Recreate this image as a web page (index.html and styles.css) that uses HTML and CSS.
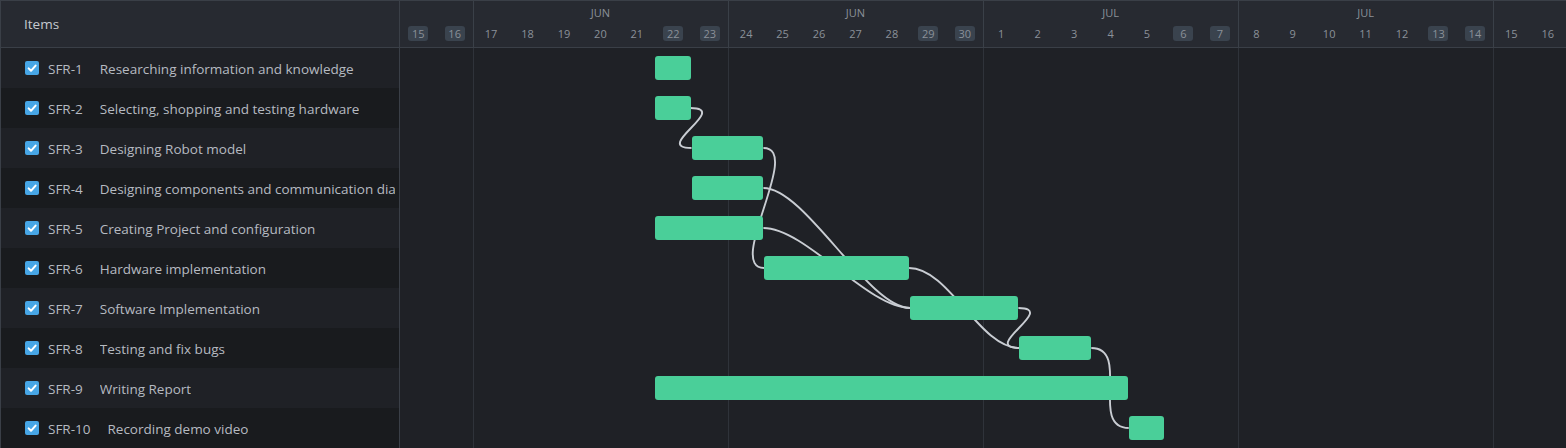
FILE: index.html
```html
<!DOCTYPE html>
<html lang="en">
<head>
<meta charset="utf-8">
<title>Gantt</title>
<link rel="stylesheet" href="styles.css">
</head>
<body>
<div class="gantt">
  <div class="side">
    <div class="side-head">Items</div>
    <div class="side-body">
      <div class="side-row"><span class="check"><svg viewBox="0 0 14 14"><path d="M3.6 7.4 L6 9.8 L10.6 4.6"/></svg></span><span class="sid">SFR-1</span><span class="title">Researching information and knowledge</span></div>
      <div class="side-row"><span class="check"><svg viewBox="0 0 14 14"><path d="M3.6 7.4 L6 9.8 L10.6 4.6"/></svg></span><span class="sid">SFR-2</span><span class="title">Selecting, shopping and testing hardware</span></div>
      <div class="side-row"><span class="check"><svg viewBox="0 0 14 14"><path d="M3.6 7.4 L6 9.8 L10.6 4.6"/></svg></span><span class="sid">SFR-3</span><span class="title">Designing Robot model</span></div>
      <div class="side-row"><span class="check"><svg viewBox="0 0 14 14"><path d="M3.6 7.4 L6 9.8 L10.6 4.6"/></svg></span><span class="sid">SFR-4</span><span class="title">Designing components and communication dia</span></div>
      <div class="side-row"><span class="check"><svg viewBox="0 0 14 14"><path d="M3.6 7.4 L6 9.8 L10.6 4.6"/></svg></span><span class="sid">SFR-5</span><span class="title">Creating Project and configuration</span></div>
      <div class="side-row"><span class="check"><svg viewBox="0 0 14 14"><path d="M3.6 7.4 L6 9.8 L10.6 4.6"/></svg></span><span class="sid">SFR-6</span><span class="title">Hardware implementation</span></div>
      <div class="side-row"><span class="check"><svg viewBox="0 0 14 14"><path d="M3.6 7.4 L6 9.8 L10.6 4.6"/></svg></span><span class="sid">SFR-7</span><span class="title">Software Implementation</span></div>
      <div class="side-row"><span class="check"><svg viewBox="0 0 14 14"><path d="M3.6 7.4 L6 9.8 L10.6 4.6"/></svg></span><span class="sid">SFR-8</span><span class="title">Testing and fix bugs</span></div>
      <div class="side-row"><span class="check"><svg viewBox="0 0 14 14"><path d="M3.6 7.4 L6 9.8 L10.6 4.6"/></svg></span><span class="sid">SFR-9</span><span class="title">Writing Report</span></div>
      <div class="side-row"><span class="check"><svg viewBox="0 0 14 14"><path d="M3.6 7.4 L6 9.8 L10.6 4.6"/></svg></span><span class="sid">SFR-10</span><span class="title">Recording demo video</span></div>
    </div>
  </div>
  <div class="chart">
    <div class="chart-head">
      <div class="week w2">
        <div class="month"></div>
        <div class="days"><span class="day"><span class="num off">15</span></span><span class="day"><span class="num off">16</span></span></div>
      </div>
      <div class="week w7 sep">
        <div class="month">JUN</div>
        <div class="days"><span class="day"><span class="num">17</span></span><span class="day"><span class="num">18</span></span><span class="day"><span class="num">19</span></span><span class="day"><span class="num">20</span></span><span class="day"><span class="num">21</span></span><span class="day"><span class="num off">22</span></span><span class="day"><span class="num off">23</span></span></div>
      </div>
      <div class="week w7 sep">
        <div class="month">JUN</div>
        <div class="days"><span class="day"><span class="num">24</span></span><span class="day"><span class="num">25</span></span><span class="day"><span class="num">26</span></span><span class="day"><span class="num">27</span></span><span class="day"><span class="num">28</span></span><span class="day"><span class="num off">29</span></span><span class="day"><span class="num off">30</span></span></div>
      </div>
      <div class="week w7 sep">
        <div class="month">JUL</div>
        <div class="days"><span class="day"><span class="num">1</span></span><span class="day"><span class="num">2</span></span><span class="day"><span class="num">3</span></span><span class="day"><span class="num">4</span></span><span class="day"><span class="num">5</span></span><span class="day"><span class="num off">6</span></span><span class="day"><span class="num off">7</span></span></div>
      </div>
      <div class="week w7 sep">
        <div class="month">JUL</div>
        <div class="days"><span class="day"><span class="num">8</span></span><span class="day"><span class="num">9</span></span><span class="day"><span class="num">10</span></span><span class="day"><span class="num">11</span></span><span class="day"><span class="num">12</span></span><span class="day"><span class="num off">13</span></span><span class="day"><span class="num off">14</span></span></div>
      </div>
      <div class="week w2 sep">
        <div class="month"></div>
        <div class="days"><span class="day"><span class="num">15</span></span><span class="day"><span class="num">16</span></span></div>
      </div>
    </div>
    <div class="chart-body">
      <div class="stripe"></div><div class="stripe"></div><div class="stripe"></div><div class="stripe"></div><div class="stripe"></div>
      <div class="stripe"></div><div class="stripe"></div><div class="stripe"></div><div class="stripe"></div><div class="stripe"></div>
      <div class="wline wl-1"></div>
      <div class="wline wl-2"></div>
      <div class="wline wl-3"></div>
      <div class="wline wl-4"></div>
      <div class="wline wl-5"></div>
      <svg class="links" width="1166" height="400">
        <path d="M290.5 60 C330.5 60 251.5 100 291.5 100"/>
        <path d="M363.4 100 C403.4 100 324.4 220 364.4 220"/>
        <path d="M363.4 140 C405.4 140 468.1 260 510.1 260"/>
        <path d="M363.4 180 C405.4 180 468.1 260 510.1 260"/>
        <path d="M509.1 220 C549.1 220 579.4 300 619.4 300"/>
        <path d="M618.4 260 C658.4 260 579.4 300 619.4 300"/>
        <path d="M691.3 300 C731.3 300 688.75 380 728.75 380"/>
      </svg>
      <div class="bar" style="grid-row:1;grid-column:8 / 9"></div>
      <div class="bar" style="grid-row:2;grid-column:8 / 9"></div>
      <div class="bar" style="grid-row:3;grid-column:9 / 11"></div>
      <div class="bar" style="grid-row:4;grid-column:9 / 11"></div>
      <div class="bar" style="grid-row:5;grid-column:8 / 11"></div>
      <div class="bar" style="grid-row:6;grid-column:11 / 15"></div>
      <div class="bar" style="grid-row:7;grid-column:15 / 18"></div>
      <div class="bar" style="grid-row:8;grid-column:18 / 20"></div>
      <div class="bar" style="grid-row:9;grid-column:8 / 21"></div>
      <div class="bar" style="grid-row:10;grid-column:21 / 22"></div>
    </div>
  </div>
</div>
</body>
</html>
```

FILE: styles.css
```css
* { box-sizing: border-box; }

html, body {
  margin: 0;
  padding: 0;
  background: #1f2126;
}

body {
  font-family: "Open Sans", "Noto Sans", sans-serif;
  overflow: hidden;
}

.gantt {
  display: flex;
  width: 1566px;
  height: 448px;
  border-top: 1px solid #3a3f47;
  border-left: 1px solid #3a3f47;
  overflow: hidden;
}

/* ---------- left panel ---------- */
.side {
  width: 399px;
  flex: none;
  border-right: 1px solid #3a3f47;
}

.side-head {
  height: 47px;
  border-bottom: 1px solid #3a3f47;
  background: #272a31;
  display: flex;
  align-items: center;
  padding-left: 23px;
  color: #c5c9cf;
  font-size: 13.5px;
}

.side-row {
  height: 40px;
  display: flex;
  align-items: center;
  padding-left: 24px;
  padding-right: 4px;
  font-size: 13.5px;
  color: #b6bac1;
  white-space: nowrap;
  overflow: hidden;
}

.side-row:nth-child(odd) { background: #1f2126; }
.side-row:nth-child(even) { background: #191b1e; }

.check {
  width: 14px;
  height: 14px;
  flex: none;
  border-radius: 2px;
  background: #47a6e6;
  margin-right: 9px;
  display: flex;
}

.check svg {
  width: 14px;
  height: 14px;
}

.check path {
  fill: none;
  stroke: #ffffff;
  stroke-width: 2;
  stroke-linecap: round;
  stroke-linejoin: round;
}

.sid {
  flex: none;
  margin-right: 17px;
  padding-top: 1px;
}

.title {
  min-width: 0;
  overflow: hidden;
  padding-top: 1px;
}

/* ---------- chart ---------- */
.chart {
  flex: 1;
  min-width: 0;
}

.chart-head {
  height: 47px;
  display: flex;
  border-bottom: 1px solid #3a3f47;
  background: #272a31;
}

.week {
  display: grid;
  grid-template-rows: 25px 21px;
  min-width: 0;
}

.w2 { flex: 2 1 0; }
.w7 { flex: 7 1 0; }

.sep { box-shadow: inset 1px 0 0 #3a4048; }

.month {
  grid-row: 1;
  align-self: start;
  padding-top: 5px;
  line-height: 14px;
  text-align: center;
  font-size: 11px;
  color: #8b9199;
}

.days {
  grid-row: 2;
  display: flex;
}

.day {
  flex: 1 1 0;
  display: flex;
  justify-content: center;
}

.num {
  width: 20px;
  height: 15px;
  line-height: 15px;
  text-align: center;
  font-size: 11px;
  color: #8b9199;
  border-radius: 3px;
}

.num.off {
  background: #3a434e;
}

.chart-body {
  display: grid;
  grid-template-columns: repeat(32, 1fr);
  grid-template-rows: repeat(10, 40px);
}

.stripe { grid-column: 1 / -1; }
.stripe:nth-child(odd) { background: #1f2126; }
.stripe:nth-child(even) { background: #191b1e; }

.wline {
  grid-row: 1 / -1;
  box-shadow: inset 1px 0 0 #2f333a;
}
.wl-1 { grid-column: 3; }
.wl-2 { grid-column: 10; }
.wl-3 { grid-column: 17; }
.wl-4 { grid-column: 24; }
.wl-5 { grid-column: 31; }

.links {
  grid-row: 1 / -1;
  grid-column: 1 / -1;
  overflow: visible;
}

.links path {
  fill: none;
  stroke: #c9cdd3;
  stroke-width: 1.9;
}

.bar {
  align-self: center;
  height: 24px;
  margin-right: 1px;
  background: #4acf99;
  border-radius: 3px;
}
```
